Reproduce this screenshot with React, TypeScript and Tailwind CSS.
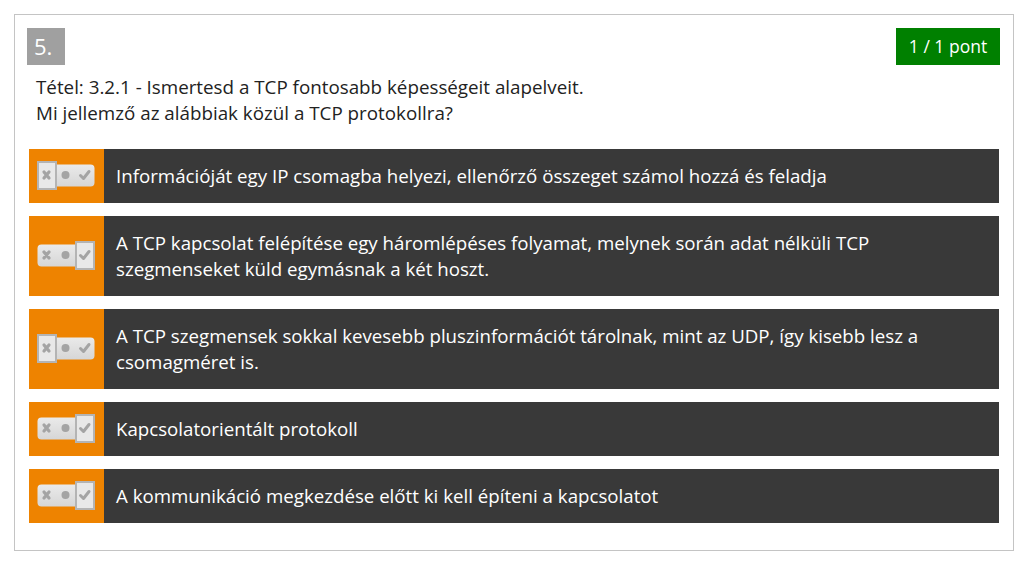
import React from "react";

type Answer = { text: string; mark: "no" | "yes" };

const answers: Answer[] = [
  { text: "Információját egy IP csomagba helyezi, ellenőrző összeget számol hozzá és feladja", mark: "no" },
  {
    text: "A TCP kapcsolat felépítése egy háromlépéses folyamat, melynek során adat nélküli TCP szegmenseket küld egymásnak a két hoszt.",
    mark: "yes",
  },
  {
    text: "A TCP szegmensek sokkal kevesebb pluszinformációt tárolnak, mint az UDP, így kisebb lesz a csomagméret is.",
    mark: "no",
  },
  { text: "Kapcsolatorientált protokoll", mark: "yes" },
  { text: "A kommunikáció megkezdése előtt ki kell építeni a kapcsolatot", mark: "yes" },
];

function Toggle({ mark }: { mark: "no" | "yes" }) {
  const boxX = mark === "no" ? 1 : 39;
  return (
    <svg width="60" height="30" viewBox="0 0 60 30">
      <defs>
        <linearGradient id="bar" x1="0" y1="0" x2="0" y2="1">
          <stop offset="0" stopColor="#eaeaea" />
          <stop offset="1" stopColor="#d6d6d6" />
        </linearGradient>
      </defs>
      <rect x="0.5" y="3.5" width="57" height="22" rx="4" fill="url(#bar)" />
      <rect x={boxX} y="1" width="18" height="27" fill="#e8e8e8" stroke="#b4b4b4" strokeWidth="2" />
      <path d="M7 11 L12 17 M12 11 L7 17" stroke="#a4a4a4" strokeWidth="3.2" strokeLinecap="round" />
      <circle cx="28.5" cy="14" r="4" fill="#a4a4a4" />
      <path d="M43.5 14.5 L46.5 17.5 L52 10.5" stroke="#a4a4a4" strokeWidth="3" strokeLinecap="round" strokeLinejoin="round" fill="none" />
    </svg>
  );
}

export default function App() {
  return (
    <div className="min-h-[562px] bg-white p-[14px] pr-[12px] font-['Open_Sans',sans-serif]">
      <div className="border border-[#c4c4c4] pt-[13px] pb-[27px]">
        <div className="flex items-start justify-between pl-[12px] pr-[13px]">
          <div className="flex h-[37px] w-[38px] items-center pl-[7px] bg-[#a0a0a0] text-[22px] text-white">5.</div>
          <div className="flex h-[37px] w-[104px] items-center justify-center bg-[#008000] text-[17.5px] text-white">
            1 / 1 pont
          </div>
        </div>
        <div className="mt-[9px] pl-[21px] text-[18.8px] leading-[26px] text-[#222]">
          <p>Tétel: 3.2.1 - Ismertesd a TCP fontosabb képességeit alapelveit.</p>
          <p>Mi jellemző az alábbiak közül a TCP protokollra?</p>
        </div>
        <div className="mt-[23px] flex flex-col gap-[13px] pl-[14px] pr-[14px]">
          {answers.map((a) => (
            <div key={a.text} className="flex">
              <div className="flex w-[75px] shrink-0 items-center bg-[#ee8300] pl-[8px]">
                <Toggle mark={a.mark} />
              </div>
              <div className="flex-1 bg-[#393939] py-[14px] pl-[12px] pr-[40px] text-[18.7px] leading-[26px] text-white">
                {a.text}
              </div>
            </div>
          ))}
        </div>
      </div>
    </div>
  );
}
